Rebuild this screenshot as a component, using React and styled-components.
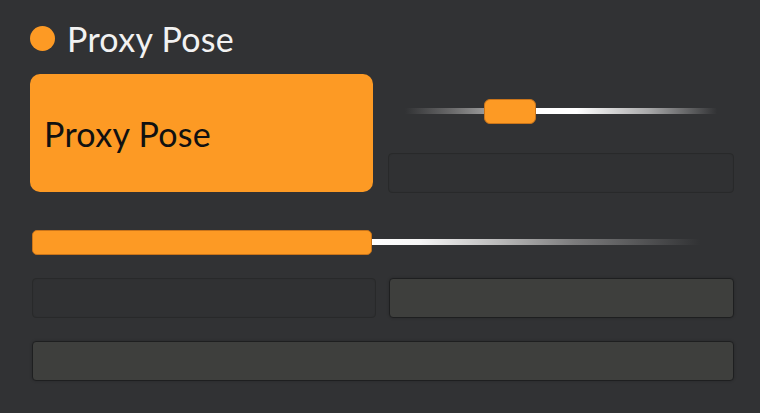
import React from "react";
import styled, { createGlobalStyle } from "styled-components";

const GlobalStyle = createGlobalStyle`
  html, body {
    margin: 0;
    padding: 0;
    background: #313234;
  }
  body {
    font-family: "Lato", "Noto Sans", sans-serif;
  }
`;

const ORANGE = "#fd9a24";

const Panel = styled.div`
  width: 760px;
  height: 413px;
  box-sizing: border-box;
  padding: 18px 26px 0 30px;
  background: #313234;
  display: flex;
  flex-direction: column;
`;

const Header = styled.div`
  display: flex;
  align-items: center;
  gap: 12px;
  height: 40px;
`;

const Dot = styled.span`
  width: 25px;
  height: 25px;
  border-radius: 50%;
  background: ${ORANGE};
`;

const Title = styled.h1`
  margin: 0;
  font-family: "Lato", "Noto Sans", sans-serif;
  font-weight: 400;
  font-size: 34px;
  color: #f2f2f2;
  letter-spacing: 0.3px;
`;

const TopGrid = styled.div`
  display: grid;
  grid-template-columns: 343px 1fr;
  column-gap: 15px;
  margin-top: 16px;
`;

const BigButton = styled.button`
  height: 118px;
  border: none;
  border-radius: 10px;
  background: ${ORANGE};
  color: #111;
  font-family: "Lato", "Noto Sans", sans-serif;
  font-size: 34px;
  text-align: left;
  padding: 0 0 0 14px;
  letter-spacing: 0.3px;
`;

const RightColumn = styled.div`
  display: flex;
  flex-direction: column;
`;

const SliderArea = styled.div`
  position: relative;
  height: 50px;
  margin-top: 16px;
`;

const Track = styled.div`
  position: absolute;
  left: ${(p) => p.$left}px;
  width: ${(p) => p.$width}px;
  top: ${(p) => p.$top}px;
  height: 6px;
  background: ${(p) => p.$gradient};
`;

const Thumb = styled.div`
  position: absolute;
  left: ${(p) => p.$left}px;
  top: ${(p) => p.$top}px;
  width: ${(p) => p.$width}px;
  height: ${(p) => p.$height}px;
  box-sizing: border-box;
  border-radius: ${(p) => p.$radius}px;
  background: ${ORANGE};
  border: 1px solid #c9741a;
`;

const Field = styled.div`
  height: 40px;
  box-sizing: border-box;
  border-radius: 4px;
  margin-top: ${(p) => p.$mt || 0}px;
  background: ${(p) => (p.$light ? "#3e3f3d" : "#303133")};
  border: 1px solid ${(p) => (p.$light ? "#1e1f20" : "#28292a")};
  box-shadow: ${(p) => (p.$light ? "0 0 3px rgba(0,0,0,0.2)" : "inset 0 0 1px #2a2b2c")};
`;

const SecondSlider = styled.div`
  position: relative;
  height: 26px;
  margin-top: 37px;
`;

const FieldRow = styled.div`
  display: grid;
  grid-template-columns: ${(p) => p.$cols};
  column-gap: 13px;
  margin-top: ${(p) => p.$mt}px;
  padding-left: 2px;
`;

export default function App() {
  return (
    <>
      <GlobalStyle />
      <Panel>
        <Header>
          <Dot />
          <Title>Proxy Pose</Title>
        </Header>
        <TopGrid>
          <BigButton>Proxy Pose</BigButton>
          <RightColumn>
            <SliderArea>
              <Track
                $left={17}
                $width={312}
                $top={18}
                $gradient="linear-gradient(90deg, rgba(120,120,120,0) 0%, #6a6a6b 15%, #9a9a9a 26%, #ffffff 40%, #ffffff 55%, #a9a9aa 78%, rgba(80,80,80,0) 100%)"
              />
              <Thumb $left={96} $top={9} $width={52} $height={25} $radius={6} />
            </SliderArea>
            <Field $mt={13} />
          </RightColumn>
        </TopGrid>
        <SecondSlider>
          <Track
            $left={340}
            $width={330}
            $top={9}
            $gradient="linear-gradient(90deg, #ffffff 0%, #f5f5f5 15%, #bdbdbd 38%, #7c7c7d 62%, rgba(60,60,62,0) 100%)"
          />
          <Thumb $left={2} $top={0} $width={340} $height={25} $radius={5} />
        </SecondSlider>
        <FieldRow $cols="344px 345px" $mt={22}>
          <Field />
          <Field $light />
        </FieldRow>
        <FieldRow $cols="702px" $mt={23}>
          <Field $light />
        </FieldRow>
      </Panel>
    </>
  );
}
